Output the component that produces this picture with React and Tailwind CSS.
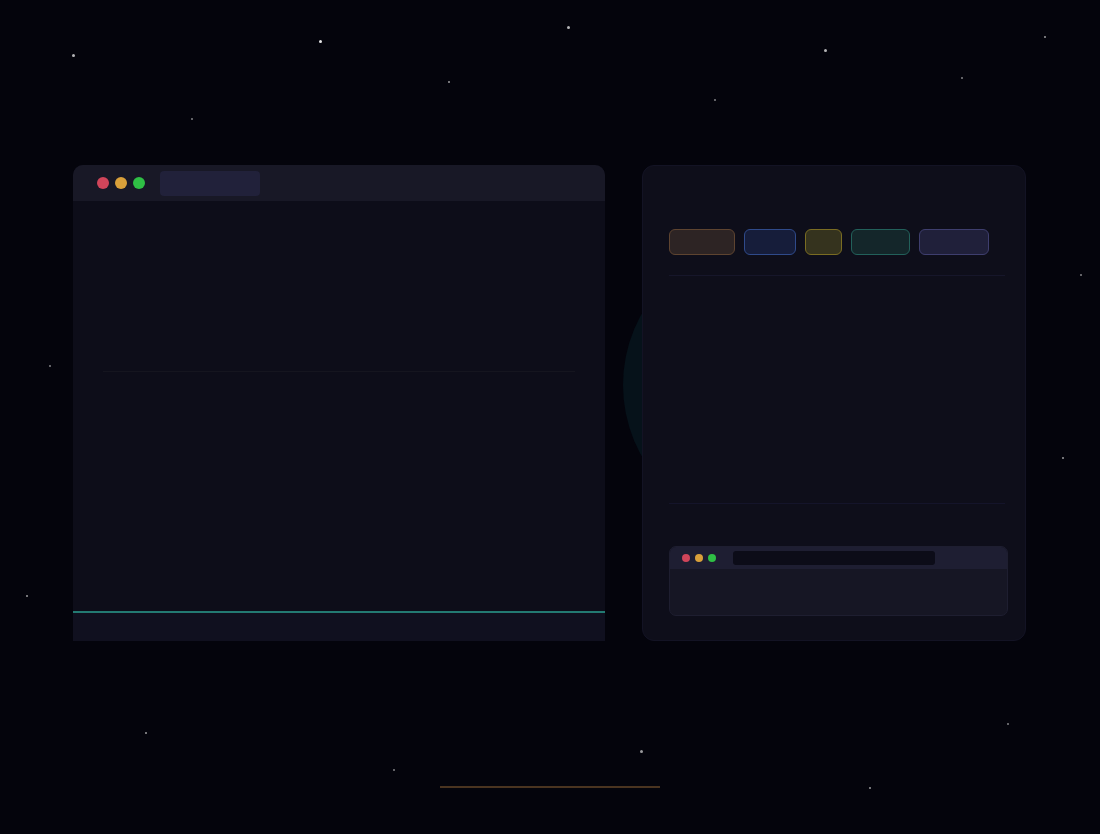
import React from 'react';

const stars = [
  { x: 72, y: 54, s: 3, o: 0.7 },
  { x: 319, y: 40, s: 3, o: 0.9 },
  { x: 567, y: 26, s: 3, o: 0.7 },
  { x: 824, y: 49, s: 3, o: 0.7 },
  { x: 1044, y: 36, s: 2, o: 0.6 },
  { x: 448, y: 81, s: 2, o: 0.6 },
  { x: 191, y: 118, s: 2, o: 0.5 },
  { x: 714, y: 99, s: 2, o: 0.5 },
  { x: 961, y: 77, s: 2, o: 0.5 },
  { x: 1080, y: 274, s: 2, o: 0.5 },
  { x: 49, y: 365, s: 2, o: 0.5 },
  { x: 1062, y: 457, s: 2, o: 0.6 },
  { x: 26, y: 595, s: 2, o: 0.6 },
  { x: 145, y: 732, s: 2, o: 0.6 },
  { x: 393, y: 769, s: 2, o: 0.5 },
  { x: 640, y: 750, s: 3, o: 0.6 },
  { x: 869, y: 787, s: 2, o: 0.6 },
  { x: 1007, y: 723, s: 2, o: 0.5 },
];

const pills = [
  { w: 'w-[66px]', cls: 'bg-[#2d2424] border-[#5e4430]' },
  { w: 'w-[52px]', cls: 'bg-[#161d3a] border-[#2f4a8a]' },
  { w: 'w-[37px]', cls: 'bg-[#35331e] border-[#7a6c22]' },
  { w: 'w-[59px]', cls: 'bg-[#14262a] border-[#22605a]' },
  { w: 'w-[70px]', cls: 'bg-[#20203a] border-[#3e3e6e]' },
];

const Dots = ({ size, gap }) => (
  <div className={`flex items-center ${gap}`}>
    <span className={`${size} rounded-full bg-[#d0455a]`} />
    <span className={`${size} rounded-full bg-[#d9a03a]`} />
    <span className={`${size} rounded-full bg-[#2fbf45]`} />
  </div>
);

export default function App() {
  return (
    <div className="relative w-[1100px] h-[834px] overflow-hidden bg-[#04040c]">
      {/* stars */}
      {stars.map((st, i) => (
        <span
          key={i}
          className="absolute rounded-full bg-white"
          style={{ left: st.x, top: st.y, width: st.s, height: st.s, opacity: st.o }}
        />
      ))}

      {/* glow circle behind card */}
      <div className="absolute left-[623px] top-[240px] w-[290px] h-[290px] rounded-full bg-[#06121a]" />

      <div className="relative flex gap-[37px] pl-[73px] pt-[165px]">
        {/* left window */}
        <div className="w-[532px] h-[476px] flex flex-col rounded-t-[10px] overflow-hidden bg-[#0d0d19]">
          <div className="h-[36px] flex items-center pl-[24px] gap-[15px] bg-[#181826]">
            <Dots size="w-[12px] h-[12px]" gap="gap-[6px]" />
            <div className="w-[100px] h-[25px] rounded-[4px] bg-[#21213a]" />
          </div>
          <div className="flex-1 flex flex-col">
            <div className="h-[170px]" />
            <div className="mx-[30px] h-px bg-[#15151f]" />
          </div>
          <div className="h-[2px] bg-[#237a72]" />
          <div className="h-[28px] bg-[#10101f]" />
        </div>

        {/* right card */}
        <div className="w-[384px] h-[476px] flex flex-col rounded-xl border border-[#131324] bg-[#0e0e1a] pl-[26px] pr-[17px] pt-[63px]">
          <div className="flex gap-[9px]">
            {pills.map((p, i) => (
              <div key={i} className={`${p.w} h-[26px] rounded-[6px] border ${p.cls}`} />
            ))}
          </div>
          <div className="mt-[20px] mr-[3px] h-px bg-[#16162a]" />
          <div className="h-[227px]" />
          <div className="mr-[3px] h-px bg-[#14142a]" />
          <div className="mt-[42px] h-[70px] flex flex-col rounded-[7px] overflow-hidden border border-[#1e1e30] bg-[#161624]">
            <div className="h-[22px] flex items-center pl-[12px] gap-[17px] bg-[#1e1e32]">
              <Dots size="w-[8px] h-[8px]" gap="gap-[5px]" />
              <div className="w-[202px] h-[14px] rounded-[3px] bg-[#0c0c18]" />
            </div>
            <div className="flex-1" />
          </div>
        </div>
      </div>

      {/* bottom accent line */}
      <div className="absolute left-[440px] top-[786px] w-[220px] h-[2px] bg-[#4a3420]" />
    </div>
  );
}
